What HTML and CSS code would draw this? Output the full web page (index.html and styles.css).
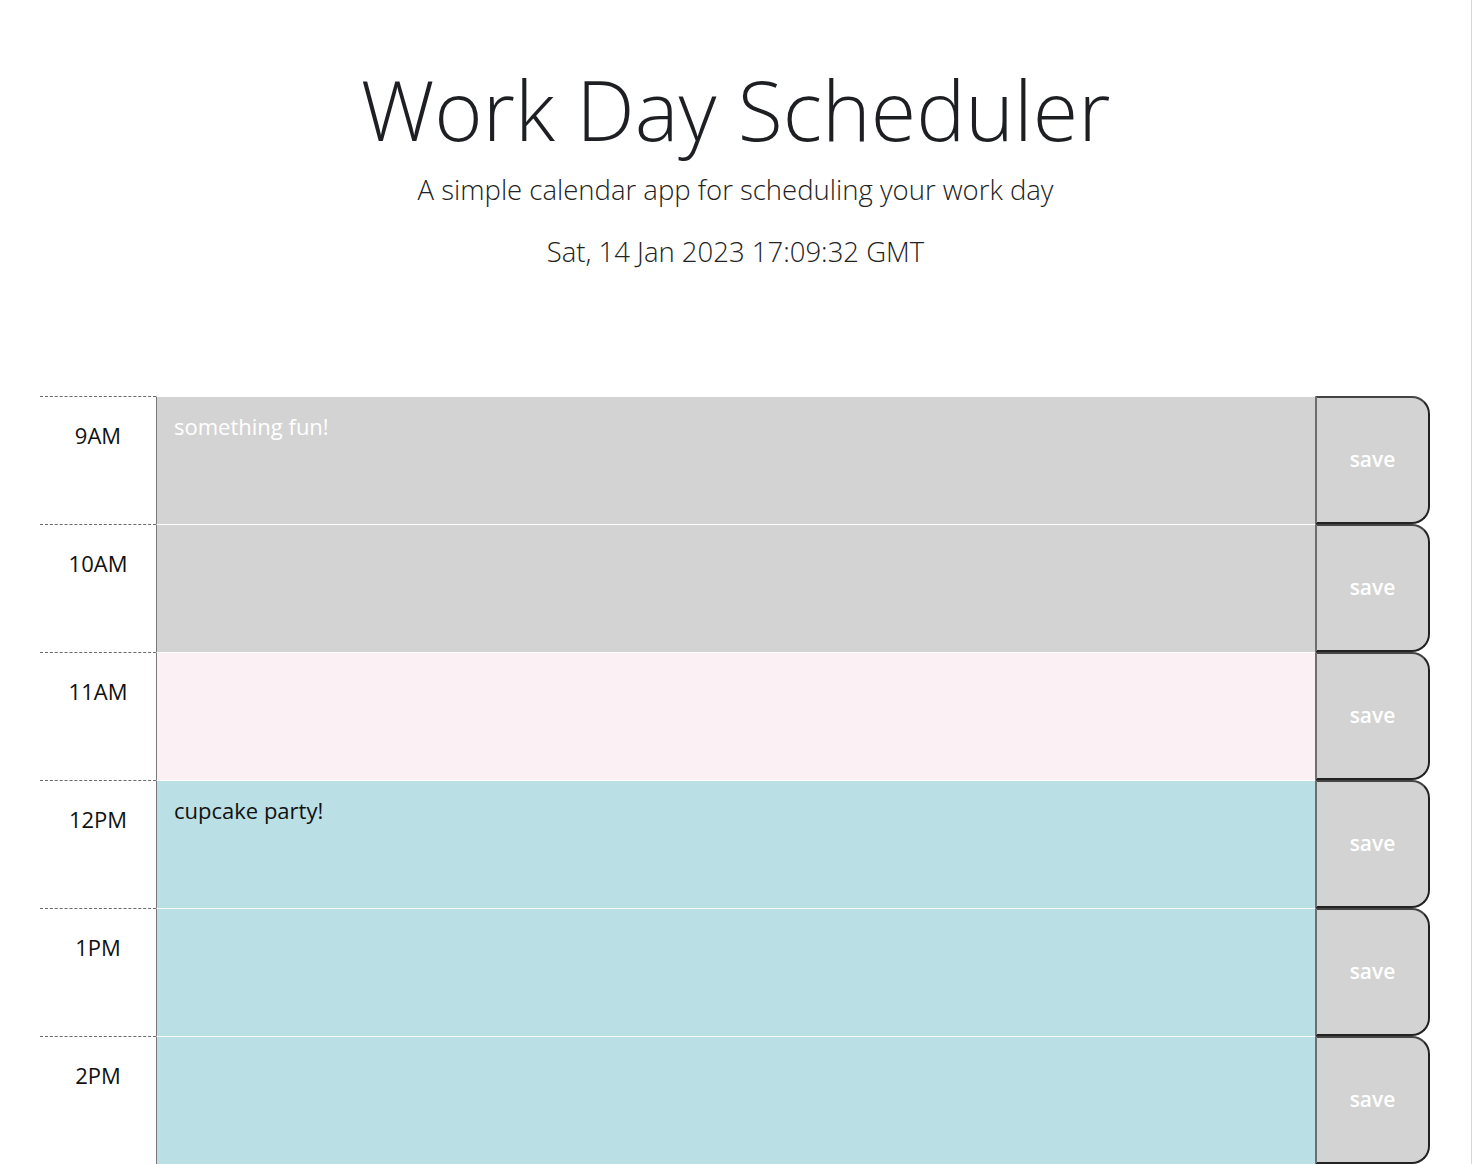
FILE: index.html
```html
<!DOCTYPE html>
<html lang="en">
<head>
<meta charset="utf-8">
<title>Work Day Scheduler</title>
<link rel="stylesheet" href="styles.css">
</head>
<body>
<div class="page">
  <header class="jumbotron">
    <h1 class="title">Work Day Scheduler</h1>
    <p class="lead">A simple calendar app for scheduling your work day</p>
    <p class="current-day">Sat, 14 Jan 2023 17:09:32 GMT</p>
  </header>
  <main class="schedule">
    <div class="time-block">
      <div class="hour">9AM</div>
      <textarea class="description past">something fun!</textarea>
      <button class="save-btn">save</button>
    </div>
    <div class="time-block">
      <div class="hour">10AM</div>
      <textarea class="description past"></textarea>
      <button class="save-btn">save</button>
    </div>
    <div class="time-block">
      <div class="hour">11AM</div>
      <textarea class="description present"></textarea>
      <button class="save-btn">save</button>
    </div>
    <div class="time-block">
      <div class="hour">12PM</div>
      <textarea class="description future">cupcake party!</textarea>
      <button class="save-btn">save</button>
    </div>
    <div class="time-block">
      <div class="hour">1PM</div>
      <textarea class="description future"></textarea>
      <button class="save-btn">save</button>
    </div>
    <div class="time-block">
      <div class="hour">2PM</div>
      <textarea class="description future"></textarea>
      <button class="save-btn">save</button>
    </div>
    <div class="time-block">
      <div class="hour">3PM</div>
      <textarea class="description future"></textarea>
      <button class="save-btn">save</button>
    </div>
    <div class="time-block">
      <div class="hour">4PM</div>
      <textarea class="description future"></textarea>
      <button class="save-btn">save</button>
    </div>
    <div class="time-block">
      <div class="hour">5PM</div>
      <textarea class="description future"></textarea>
      <button class="save-btn">save</button>
    </div>
  </main>
</div>
</body>
</html>
```

FILE: styles.css
```css
* { box-sizing: border-box; }

html, body {
  margin: 0;
  padding: 0;
  background: #ffffff;
}

body {
  font-family: "Open Sans", "Noto Sans", sans-serif;
  color: #212529;
}

.page {
  border-right: 1px solid #d6d6d6;
  min-height: 100vh;
  padding-bottom: 40px;
}

.jumbotron {
  text-align: center;
  padding-top: 60px;
  height: 396px;
}

.title {
  font-size: 82.6px;
  font-weight: 300;
  line-height: 98px;
  margin: 0;
  color: #1d1f22;
}

.lead {
  font-size: 27.5px;
  font-weight: 300;
  margin: 12px 0 0;
  line-height: 40px;
  color: #222;
}

.current-day {
  font-size: 27.5px;
  font-weight: 300;
  margin: 22px 0 0;
  line-height: 40px;
  color: #222;
}

.schedule {
  display: flex;
  flex-direction: column;
  padding-left: 40px;
  padding-right: 41px;
}

.time-block {
  display: flex;
  height: 128px;
}

.hour {
  width: 116px;
  flex: none;
  border-top: 1px dashed #6a6a6a;
  text-align: center;
  font-size: 22px;
  color: #111;
  padding-top: 23px;
}

.description {
  flex: 1;
  border: none;
  border-left: 1px solid #7a7a7a;
  border-top: 1px solid #ffffff;
  margin: 0;
  resize: none;
  font-family: "Open Sans", "Noto Sans", sans-serif;
  font-size: 22px;
  padding: 14px 17px;
  line-height: 1.4;
  outline: none;
}

.past {
  background: #d3d3d3;
  color: #ffffff;
}

.present {
  background: #fbf0f4;
  color: #ffffff;
}

.future {
  background: #badfe4;
  color: #111;
}

.save-btn {
  width: 115px;
  flex: none;
  margin: 0;
  background: #d3d3d3;
  color: #ffffff;
  font-family: "Open Sans", "Noto Sans", sans-serif;
  font-size: 21px;
  font-weight: 600;
  border: 2px solid #222;
  border-left: 2px solid #6e6e6e;
  border-top-color: #444;
  border-radius: 0 18px 18px 0;
  padding: 0 0 2px;
}
```
